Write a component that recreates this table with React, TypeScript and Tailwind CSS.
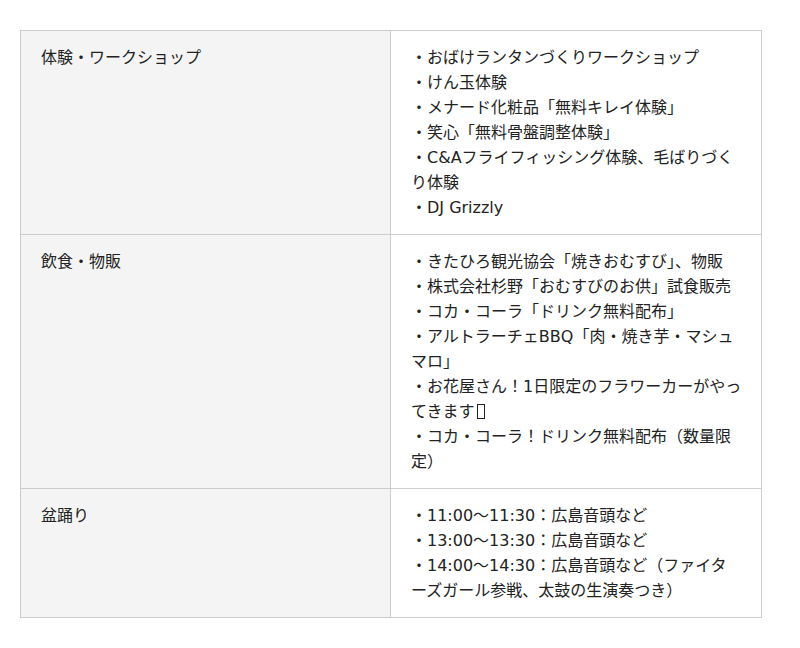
import type { ReactNode } from 'react';

// 見つからない絵文字は四角（豆腐）で表示
const Tofu = () => (
  <span className="inline-block align-[-2px] w-[8px] h-[15px] ml-[2px] mr-[1px] border border-[#222]" />
);

const rows: { label: string; items: ReactNode[] }[] = [
  {
    label: '体験・ワークショップ',
    items: [
      '・おばけランタンづくりワークショップ',
      '・けん玉体験',
      '・メナード化粧品「無料キレイ体験」',
      '・笑心「無料骨盤調整体験」',
      '・C&Aフライフィッシング体験、毛ばりづくり体験',
      '・DJ Grizzly',
    ],
  },
  {
    label: '飲食・物販',
    items: [
      '・きたひろ観光協会「焼きおむすび」、物販',
      '・株式会社杉野「おむすびのお供」試食販売',
      '・コカ・コーラ「ドリンク無料配布」',
      '・アルトラーチェBBQ「肉・焼き芋・マシュマロ」',
      <>
        ・お花屋さん！1日限定のフラワーカーがやってきます
        <Tofu />
      </>,
      '・コカ・コーラ！ドリンク無料配布（数量限定）',
    ],
  },
  {
    label: '盆踊り',
    items: [
      '・11:00〜11:30：広島音頭など',
      '・13:00〜13:30：広島音頭など',
      '・14:00〜14:30：広島音頭など（ファイターズガール参戦、太鼓の生演奏つき）',
    ],
  },
];

export default function App() {
  return (
    <div
      className="bg-white min-h-[648px] px-5 pt-[30px] text-[#222] text-[16px] leading-[25px]"
      style={{ fontFamily: '"DejaVu Sans", "Noto Sans CJK JP", sans-serif' }}
    >
      <table className="w-[742px] border-collapse">
        <tbody>
          {rows.map((r) => (
            <tr key={r.label}>
              <td className="w-[370px] align-top border border-[#cccccc] bg-[#f4f4f4] px-5 py-[14px]">
                {r.label}
              </td>
              <td className="align-top border border-[#cccccc] pl-5 pr-[19px] py-[14px]">
                {r.items.map((t, i) => (
                  <div key={i}>{t}</div>
                ))}
              </td>
            </tr>
          ))}
        </tbody>
      </table>
    </div>
  );
}
